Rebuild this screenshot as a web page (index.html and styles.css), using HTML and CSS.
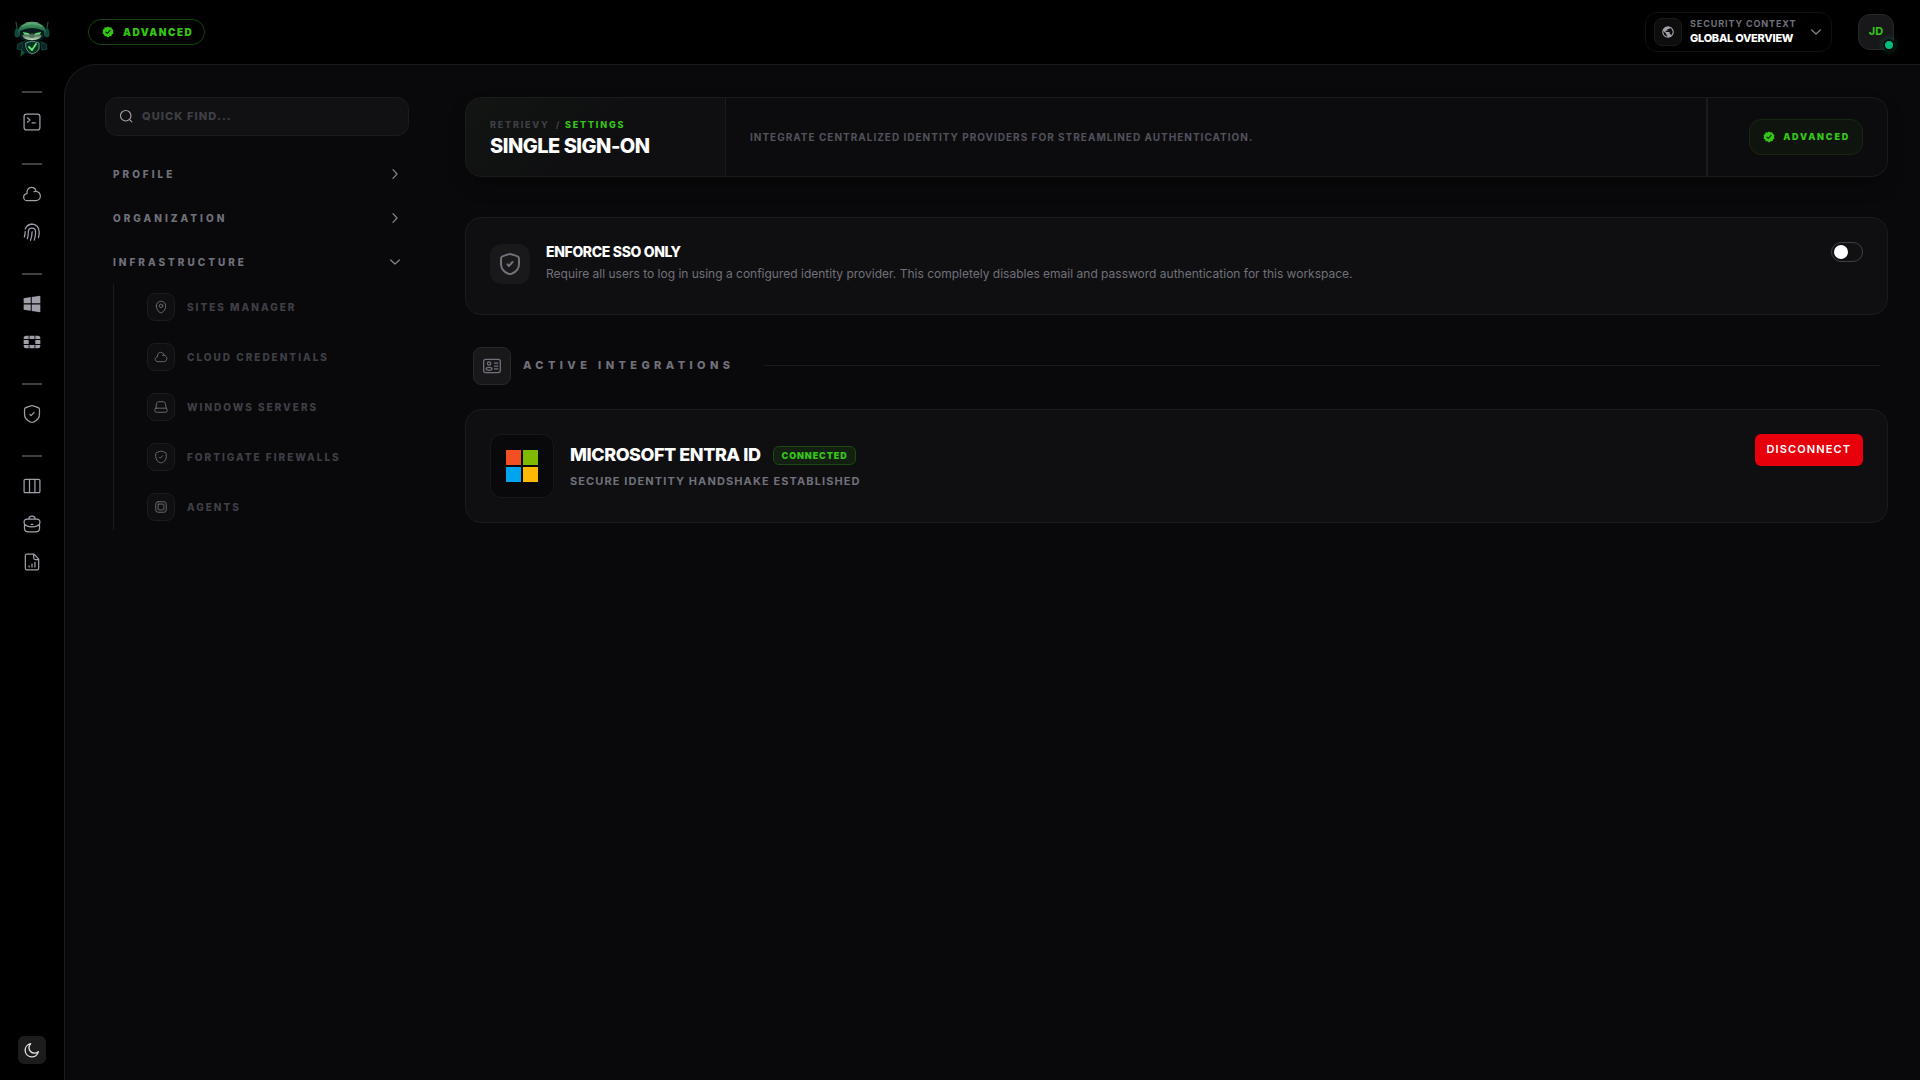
FILE: index.html
```html
<!DOCTYPE html>
<html lang="en">
<head>
<meta charset="utf-8">
<meta name="viewport" content="width=device-width, initial-scale=1">
<title>Single Sign-On – Retrievy</title>
<link rel="stylesheet" href="styles.css">
</head>
<body>
<svg class="sprite" aria-hidden="true">
  <symbol id="i-cloud" viewBox="0 0 24 24"><path d="M6.300 20C3.900 20 2 18.100 2 15.800s1.800-4 4-4.300C5.500 7.200 8 4 11.300 4c3 0 5.100 2 5.700 4.800 2.900.6 5 3 5 5.900 0 3-2.400 5.300-5.400 5.300zM14.500 9.200c.8-.4 1.600-.5 2.500-.4"/></symbol>
  <symbol id="i-shield" viewBox="0 0 24 24"><path d="M3 10.400c0-3.200 0-4.800.4-5.300.4-.6 1.900-1.100 4.800-2.100l.6-.2C10.400 2.300 11.200 2 12 2s1.600.3 3.200.8l.6.200c2.900 1 4.400 1.500 4.800 2.100.4.500.4 2.100.4 5.300v1.600c0 5.600-4.200 8.400-6.900 9.500-.7.300-1.100.5-2.100.5s-1.400-.2-2.100-.5C7.200 20.400 3 17.600 3 12z"/><path d="M9.500 12.400l1.400 1.600 3.600-4"/></symbol>
  <symbol id="i-verified" viewBox="0 0 24 24"><path fill="currentColor" stroke="none" fill-rule="evenodd" d="M12 1l3 2 3.600-.3 1.300 3.400 3 2-.9 3.500.9 3.600-3 2-1.300 3.400-3.600-.2L12 23l-3-2.600-3.600.2-1.300-3.400-3-2 .9-3.600-.9-3.500 3-2 1.300-3.400L9 3zM16.800 8.100a1 1 0 0 0-1.500 0l-4.800 5.300-1.900-2a1 1 0 0 0-1.500 1.400l2.600 2.800a1 1 0 0 0 1.500 0l5.600-6.100a1 1 0 0 0 0-1.400z"/></symbol>
  <symbol id="i-down" viewBox="0 0 24 24"><path d="M4.500 8.500l7.500 7 7.500-7"/></symbol>
  <symbol id="i-right" viewBox="0 0 24 24"><path d="M8.500 4.500l7 7.500-7 7.500"/></symbol>
</svg>

<div class="app">
  <nav class="rail" aria-label="Main">
    <a class="logo" href="#" aria-label="Retrievy">
      <svg viewBox="0 0 36 36">
        <defs>
          <linearGradient id="helm" x1="0" y1="0" x2="0" y2="1"><stop offset="0" stop-color="#54a56d"/><stop offset=".5" stop-color="#175a3e"/><stop offset="1" stop-color="#092c27"/></linearGradient>
          <linearGradient id="face" x1="0" y1="0" x2="0" y2="1"><stop offset="0" stop-color="#15342c"/><stop offset="1" stop-color="#d0e9c9"/></linearGradient>
        </defs>
        <path d="M2 1l1.500 9M34 1l-1.500 9" stroke="#175541" stroke-width="1.200" fill="none"/>
        <path d="M8 21l-4 2-1 5 5 1zM28 21l4 2 1 5-5 1z" fill="#08262a" stroke="#15504a" stroke-width=".8"/>
        <path d="M9 20h18l-1 9-7 4H15l-7-2-1 4 2-8z" fill="#06201c"/>
        <ellipse cx="3" cy="12" rx="2.500" ry="4.500" fill="#114840"/><ellipse cx="33" cy="12" rx="2.500" ry="4.500" fill="#114840"/>
        <ellipse cx="18" cy="11" rx="14" ry="10" fill="url(#helm)"/>
        <path d="M12 2q6-2 12 0M8 5q10-5 20 0" fill="none" stroke="#67b37d" stroke-width=".8"/>
        <path d="M6 10q12-6 24 0v6q-12 9-24 0z" fill="#061a1c"/>
        <path d="M8 14q10-4 20 0-1 5-10 5T8 14z" fill="url(#face)"/>
        <path d="M9 11l5 1 2 2-6-.5zM27 11l-5 1-2 2 6-.5z" fill="#60dc71"/>
        <path d="M16 16h4" stroke="#17402b" stroke-width=".8"/>
        <path d="M12 22l6-2 7 2v6q-2 4-7 5-5-2-6-6z" fill="#073225" stroke="#5f8e7c" stroke-width="1"/>
        <path d="M15 26l3 3 4-6" fill="none" stroke="#67e569" stroke-width="1.800"/>
        <path d="M7 28l4 4-5 4 1-4z" fill="#0f5236"/>
      </svg>
    </a>
    <div class="rail-group">
      <a href="#" aria-label="Console"><svg class="ic" viewBox="0 0 24 24"><rect x="2.500" y="2.500" width="19" height="19" rx="3"/><path d="M6.500 7l3 2.600-3 2.600M12 13h4"/></svg></a>
    </div>
    <div class="rail-group">
      <a href="#" aria-label="Cloud"><svg class="ic"><use href="#i-cloud"/></svg></a>
      <a href="#" aria-label="Identity"><svg class="ic" viewBox="0 0 24 24"><path d="M2.800 18c.8-2 1-4 1-6.500M6.300 20c1.200-3 1.300-5.300 1.300-8 0-2.700 1.900-4.600 4.400-4.600 2.600 0 4.300 2 4.300 4.600 0 3-.3 6-1.600 9.700M10.200 22c1.500-3.600 1.900-6.500 1.900-10.300M3.900 8.300C5.200 4.700 8.300 2.500 12 2.500c5 0 8.600 3.900 8.600 9.200 0 2.700-.2 4.800-.8 7M12.200 2.500c-2.100 0-3.900.8-5.200 2.200"/></svg></a>
    </div>
    <div class="rail-group">
      <a href="#" aria-label="Windows"><svg class="ic solid" viewBox="0 0 24 24"><path d="M2 5l8.500-1.300v7.500H2zM11.700 3.500L22 2v9.200H11.700zM2 12.700h8.500v7.500L2 19zM11.700 12.700H22V22l-10.300-1.600z"/></svg></a>
      <a href="#" aria-label="Firewalls"><svg class="ic solid" viewBox="0 0 24 24"><path d="M9 4.500h6v4H9zM9 15.500h6v4H9zM2 9.500h6v5H2zM16 9.500h6v5h-6zM5 4.500h3v4H2v-1a3 3 0 0 1 3-3zM19 4.500a3 3 0 0 1 3 3v1h-6v-4zM2 15.500h6v4H5a3 3 0 0 1-3-3zM16 15.500h6v1a3 3 0 0 1-3 3h-3z"/></svg></a>
    </div>
    <div class="rail-group">
      <a href="#" aria-label="Security"><svg class="ic"><use href="#i-shield"/></svg></a>
    </div>
    <div class="rail-group">
      <a href="#" aria-label="Boards"><svg class="ic" viewBox="0 0 24 24"><rect x="2.500" y="4" width="19" height="16" rx="1.500"/><path d="M9 4v16M15.500 4v16"/></svg></a>
      <a href="#" aria-label="Cases"><svg class="ic" viewBox="0 0 24 24"><path d="M8 6c.4-2.400 1.500-3.500 4-3.500S15.600 3.600 16 6M6.500 6h11c2.800 0 4 1 4 3.500v1c0 2.500-4 5-9.500 5s-9.500-2.500-9.500-5v-1C2.500 7 3.700 6 6.500 6zM3 13v4.500c0 3 1.500 4 4.500 4h9c3 0 4.500-1 4.500-4V13M11 12.500h2"/></svg></a>
      <a href="#" aria-label="Reports"><svg class="ic" viewBox="0 0 24 24"><path d="M14.500 2.500H6a2 2 0 0 0-2 2v15a2 2 0 0 0 2 2h12a2 2 0 0 0 2-2V8.500zM14 2.500V7a2 2 0 0 0 2 2h4M8.500 18v-1.500M12 18v-3.500M15.500 18v-5.500"/></svg></a>
    </div>
    <button class="theme" type="button" aria-label="Dark mode"><svg viewBox="0 0 24 24"><path d="M21.500 14.500A8 8 0 0 1 10 2.500 10 10 0 1 0 21.500 14.500z"/></svg></button>
  </nav>

  <header class="topbar">
    <span class="plan"><svg><use href="#i-verified"/></svg>ADVANCED</span>
    <div class="topbar-right">
      <button class="context" type="button">
        <span class="tile"><svg class="solid" viewBox="0 0 24 24"><path fill-rule="evenodd" d="M12 2a10 10 0 1 0 0 20 10 10 0 0 0 0-20zm-1 17.900A8 8 0 0 1 4.200 10.200L9 15v1a2 2 0 0 0 2 2zm6.900-2.500A2 2 0 0 0 16 16h-1v-3a1 1 0 0 0-1-1H8v-2h2a1 1 0 0 0 1-1V7h2a2 2 0 0 0 2-2v-.4a8 8 0 0 1 2.900 12.800z"/></svg></span>
        <span class="context-text"><span class="context-label">SECURITY CONTEXT</span><span class="context-value">GLOBAL OVERVIEW</span></span>
        <svg class="chev"><use href="#i-down"/></svg>
      </button>
      <button class="avatar" type="button">JD<span class="status"></span></button>
    </div>
  </header>

  <div class="stage">
    <aside class="settings-nav">
      <label class="search">
        <svg viewBox="0 0 24 24"><circle cx="11.500" cy="11.500" r="9"/><path d="M18.500 18.500L22 22"/></svg>
        <input type="search" placeholder="QUICK FIND..." aria-label="Quick find">
      </label>
      <div class="sections">
        <button class="section" type="button">PROFILE<svg class="chev"><use href="#i-right"/></svg></button>
        <button class="section" type="button">ORGANIZATION<svg class="chev"><use href="#i-right"/></svg></button>
        <button class="section" type="button" aria-expanded="true">INFRASTRUCTURE<svg class="chev"><use href="#i-down"/></svg></button>
        <ul class="links">
          <li><a href="#"><span class="tile"><svg viewBox="0 0 24 24"><path d="M4 10.100C4 5.600 7.600 2 12 2s8 3.600 8 8.100c0 4.500-2.600 9.700-6.600 11.600a3.300 3.300 0 0 1-2.800 0C6.600 19.800 4 14.600 4 10.100z"/><circle cx="12" cy="10" r="3"/></svg></span>SITES MANAGER</a></li>
          <li><a href="#"><span class="tile"><svg><use href="#i-cloud"/></svg></span>CLOUD CREDENTIALS</a></li>
          <li><a href="#"><span class="tile"><svg viewBox="0 0 24 24"><path d="M3 14.500L4.500 6C5 3.800 6 3 8 3h8c2 0 3 .8 3.500 3L21 14.500"/><rect x="1.500" y="14" width="21" height="7" rx="2.500"/></svg></span>WINDOWS SERVERS</a></li>
          <li><a href="#"><span class="tile"><svg><use href="#i-shield"/></svg></span>FORTIGATE FIREWALLS</a></li>
          <li><a href="#"><span class="tile"><svg viewBox="0 0 24 24"><rect x="3" y="3" width="18" height="18" rx="4"/><rect x="7" y="7" width="10" height="10" rx="1"/></svg></span>AGENTS</a></li>
        </ul>
      </div>
    </aside>

    <main class="content">
      <section class="hero">
        <div class="hero-title">
          <div class="crumbs"><a href="#">RETRIEVY</a><span>/</span><b>SETTINGS</b></div>
          <h1>SINGLE SIGN-ON</h1>
        </div>
        <p class="hero-desc">INTEGRATE CENTRALIZED IDENTITY PROVIDERS FOR STREAMLINED AUTHENTICATION.</p>
        <div class="hero-side"><span class="badge"><svg><use href="#i-verified"/></svg>ADVANCED</span></div>
      </section>

      <section class="card enforce">
        <span class="enforce-icon"><svg><use href="#i-shield"/></svg></span>
        <div class="enforce-text">
          <h2><label for="sso">ENFORCE SSO ONLY</label></h2>
          <p>Require all users to log in using a configured identity provider. This completely disables email and password authentication for this workspace.</p>
        </div>
        <input class="switch" id="sso" type="checkbox" role="switch">
      </section>

      <div class="heading">
        <span class="heading-icon"><svg viewBox="0 0 24 24"><rect x="2" y="4" width="20" height="16" rx="2.500"/><circle cx="8.500" cy="9" r="2"/><ellipse cx="8.500" cy="15.300" rx="3.500" ry="1.800"/><path d="M15 8.500h4M15 12h4M15 15.500h4"/></svg></span>
        <h2>ACTIVE INTEGRATIONS</h2>
        <span class="rule"></span>
      </div>

      <section class="card provider">
        <span class="provider-logo"><svg viewBox="0 0 32 32" shape-rendering="crispEdges"><path fill="#f25022" d="M0 0h15v15H0z"/><path fill="#7fba00" d="M17 0h15v15H17z"/><path fill="#00a4ef" d="M0 17h15v15H0z"/><path fill="#ffb900" d="M17 17h15v15H17z"/></svg></span>
        <div class="provider-text">
          <div class="provider-name"><h3>MICROSOFT ENTRA ID</h3><span class="connected">CONNECTED</span></div>
          <p>SECURE IDENTITY HANDSHAKE ESTABLISHED</p>
        </div>
        <button class="disconnect" type="button">DISCONNECT</button>
      </section>
    </main>
  </div>
</div>
</body>
</html>
```
FILE: styles.css
```css
:root {
  --green: #34c516;
  --line: #1b1b1e;
  --panel: #0f0f11;
  --muted: #71717b;
  --dim: #3f3f46;
}
* { box-sizing: border-box; }
body {
  margin: 0;
  background: #000;
  color: #fff;
  font-family: Inter, "Liberation Sans", sans-serif;
  font-size: 12px;
}
h1, h2, h3, p, ul { margin: 0; padding: 0; }
a { color: inherit; text-decoration: none; }
button, input { font: inherit; color: inherit; letter-spacing: inherit; }
button { margin: 0; padding: 0; border: 0; background: none; cursor: pointer; }
svg {
  display: block;
  flex: none;
  fill: none;
  stroke: currentColor;
  stroke-width: 1.5;
  stroke-linecap: round;
  stroke-linejoin: round;
}
.solid { fill: currentColor; stroke: none; }
.sprite { position: absolute; width: 0; height: 0; }

.app {
  display: grid;
  grid-template-columns: 64px 1fr;
  grid-template-rows: 64px 1fr;
  min-height: 100vh;
}

/* icon rail */
.rail {
  grid-row: 1 / 3;
  display: flex;
  flex-direction: column;
  align-items: center;
  padding: 20px 0 16px;
  color: #9f9fa9;
}
.logo svg { width: 36px; height: 38px; stroke: none; }
.logo { height: 49px; }
.rail-group {
  display: flex;
  flex-direction: column;
  align-items: center;
  margin-top: 22px;
}
.rail-group::before {
  content: "";
  width: 20px;
  height: 2px;
  margin-bottom: 10px;
  background: #3f3f46;
}
.rail-group a {
  display: grid;
  place-items: center;
  width: 38px;
  height: 38px;
}
.ic { width: 20px; height: 20px; }
.theme {
  display: grid;
  place-items: center;
  width: 28px;
  height: 28px;
  margin-top: auto;
  border-radius: 6px;
  background: #1c1c1d;
  color: #e4e4e7;
}
.theme svg { width: 16px; height: 16px; stroke-width: 2; }

/* top bar */
.topbar {
  display: flex;
  align-items: center;
  justify-content: space-between;
  padding: 0 26px 0 24px;
}
.plan {
  display: flex;
  align-items: center;
  gap: 9px;
  height: 26px;
  padding: 0 11px 1px 13px;
  border: 1px solid #16460c;
  border-radius: 13px;
  color: var(--green);
  font-size: 10px;
  font-weight: 900;
  letter-spacing: 0.15em;
}
.plan svg, .badge svg { width: 12px; height: 12px; }
.topbar-right { display: flex; align-items: center; gap: 26px; }
.context {
  display: flex;
  align-items: center;
  gap: 8px;
  width: 187px;
  height: 40px;
  padding: 0 8px;
  border: 1px solid #111113;
  border-radius: 12px;
  text-align: left;
}
.tile {
  display: grid;
  place-items: center;
  flex: none;
  width: 28px;
  height: 28px;
  border: 1px solid var(--line);
  border-radius: 8px;
  background: #0d0d0e;
}
.tile svg { width: 14px; height: 14px; }
.context .tile { color: #a1a1aa; }
.context-text {
  display: flex;
  flex-direction: column;
  flex: 1;
  gap: 3px;
  padding-bottom: 2px;
  white-space: nowrap;
}
.context-label {
  color: var(--muted);
  font-size: 9px;
  line-height: 11px;
  font-weight: 700;
  letter-spacing: 0.1em;
}
.context-value { font-size: 11px; line-height: 12px; font-weight: 800; letter-spacing: -0.025em; }
.chev { width: 14px; height: 14px; color: #85858e; stroke-width: 2; }
.avatar {
  position: relative;
  width: 36px;
  height: 36px;
  padding-bottom: 2px;
  border: 1px solid #27272a;
  border-radius: 12px;
  background: #18181b;
  color: var(--green);
  font-size: 11px;
  font-weight: 700;
}
.status {
  position: absolute;
  right: -2px;
  bottom: -2px;
  width: 12px;
  height: 12px;
  border: 2px solid #09090b;
  border-radius: 50%;
  background: #00bc7d;
  box-shadow: 0 0 6px #00bc7d66;
}

/* workspace */
.stage {
  display: flex;
  gap: 56px;
  padding: 32px 32px 32px 40px;
  border-top: 1px solid var(--line);
  border-left: 1px solid var(--line);
  border-top-left-radius: 32px;
  background: #09090b;
}
.settings-nav { flex: none; width: 304px; }
.search {
  display: flex;
  align-items: center;
  gap: 9px;
  height: 39px;
  padding: 0 13px 2px;
  border: 1px solid var(--line);
  border-radius: 12px;
  background: #111113;
  color: #9f9fa9;
}
.search svg { width: 14px; height: 14px; stroke-width: 2; }
.search input {
  flex: 1;
  min-width: 0;
  padding: 0;
  border: 0;
  outline: 0;
  background: none;
  font-size: 11px;
  font-weight: 800;
  letter-spacing: 0.1em;
}
.search input::placeholder { color: var(--dim); opacity: 1; }
.sections { display: flex; flex-direction: column; padding: 16px 8px 0; }
.section {
  display: flex;
  align-items: center;
  justify-content: space-between;
  height: 44px;
  color: var(--muted);
  font-size: 10px;
  font-weight: 800;
  letter-spacing: 0.3em;
}
.section .chev { margin-right: -1px; }
.links {
  display: grid;
  gap: 4px;
  padding-left: 33px;
  border-left: 1px solid var(--line);
  list-style: none;
}
.links a {
  display: flex;
  align-items: center;
  gap: 12px;
  height: 46px;
  color: var(--dim);
  font-size: 10px;
  font-weight: 800;
  letter-spacing: 0.2em;
}
.links .tile { background: var(--panel); color: var(--muted); }

.content { flex: 1; min-width: 0; }
.hero {
  display: flex;
  min-height: 80px;
  border: 1px solid var(--line);
  border-radius: 16px;
  background: #0c0c0e;
  box-shadow: 0 10px 20px -4px #00000050;
  overflow: hidden;
}
.hero-title {
  display: flex;
  flex-direction: column;
  justify-content: center;
  flex: none;
  width: 260px;
  padding: 2px 24px 0;
  border-right: 1px solid var(--line);
  background: linear-gradient(135deg, #121512, #0f0f11 50%);
}
.crumbs {
  display: flex;
  gap: 4px;
  font-size: 9px;
  line-height: 12px;
  font-weight: 800;
  letter-spacing: 0.2em;
  color: var(--dim);
}
.crumbs a { margin-right: 2px; }
.crumbs b { color: var(--green); font-weight: 800; }
h1 { margin-top: 3px; font-size: 20px; line-height: 24px; font-weight: 800; letter-spacing: -0.025em; }
.hero-desc {
  display: flex;
  align-items: center;
  flex: 1;
  padding: 0 24px;
  color: #52525c;
  font-size: 10px;
  font-weight: 700;
  letter-spacing: 0.1em;
}
.hero-side {
  display: flex;
  align-items: center;
  padding: 0 24px 0 41px;
  border-left: 2px solid var(--line);
}
.badge {
  display: flex;
  align-items: center;
  gap: 8px;
  height: 36px;
  padding: 0 12px 1px 13px;
  border: 1px solid #16280f;
  border-radius: 12px;
  background: #0f150e;
  color: var(--green);
  font-size: 9px;
  font-weight: 900;
  letter-spacing: 0.2em;
}
.card {
  display: flex;
  align-items: flex-start;
  gap: 16px;
  padding: 24px;
  border: 1px solid var(--line);
  border-radius: 16px;
  background: var(--panel);
}
.enforce { min-height: 98px; margin-top: 40px; }
.enforce-icon {
  display: grid;
  place-items: center;
  flex: none;
  width: 40px;
  height: 40px;
  margin-top: 2px;
  border-radius: 12px;
  background: #19191b;
  color: var(--muted);
}
.enforce-icon svg { width: 24px; height: 24px; stroke-width: 2; }
.enforce-text { flex: 1; }
.enforce h2 { font-size: 14px; line-height: 20px; font-weight: 800; letter-spacing: -0.025em; }
.enforce p { margin-top: 2px; color: var(--muted); font-size: 12px; line-height: 20px; }
.switch {
  appearance: none;
  display: flex;
  align-items: center;
  flex: none;
  width: 32px;
  height: 20px;
  margin: 0;
  padding: 0 2px;
  border: 1px solid #3f3f42;
  border-radius: 10px;
  background: #111113;
}
.switch::before { content: ""; width: 14px; height: 14px; border-radius: 50%; background: #fff; }
.switch:checked { justify-content: flex-end; background: var(--green); }

.heading { display: flex; align-items: center; gap: 12px; margin: 32px 8px 24px; }
.heading-icon {
  display: grid;
  place-items: center;
  width: 38px;
  height: 38px;
  border: 1px solid #27272a;
  border-radius: 8px;
  background: #18181b;
  color: var(--muted);
}
.heading-icon svg { width: 20px; height: 20px; }
.heading h2 {
  padding-bottom: 2px;
  color: var(--muted);
  font-size: 11px;
  font-weight: 800;
  letter-spacing: 0.4em;
}
.rule { flex: 1; height: 1px; margin: 0 0 2px 18px; background: var(--line); }

.provider { min-height: 114px; }
.provider-logo {
  display: grid;
  place-items: center;
  flex: none;
  width: 64px;
  height: 64px;
  border: 1px solid #18181b;
  border-radius: 12px;
  background: #09090b;
}
.provider-logo svg { width: 32px; height: 32px; stroke: none; }
.provider-text { flex: 1; padding-top: 7px; }
.provider-name { display: flex; align-items: center; gap: 12px; }
h3 { font-size: 18px; line-height: 28px; font-weight: 800; letter-spacing: -0.025em; }
.connected {
  display: flex;
  align-items: center;
  height: 19px;
  padding: 0 7px 0 8px;
  border: 1px solid #1a4a10;
  border-radius: 6px;
  background: #121f11;
  color: var(--green);
  font-size: 9px;
  font-weight: 900;
  letter-spacing: 0.1em;
}
.provider p { margin-top: 4px; color: var(--muted); font-size: 11px; line-height: 16px; font-weight: 700; letter-spacing: 0.1em; }
.disconnect {
  height: 32px;
  padding: 0 12px 2px;
  border-radius: 6px;
  background: #e7000b;
  font-size: 11px;
  font-weight: 600;
  letter-spacing: 0.1em;
}
```
